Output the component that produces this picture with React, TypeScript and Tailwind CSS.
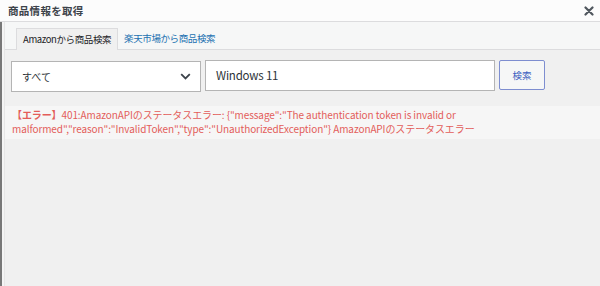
export default function App() {
  const font = { fontFamily: '"Noto Sans CJK JP", "Noto Sans", sans-serif' };
  return (
    <div className="w-[600px] h-[286px] overflow-hidden bg-[#f0f0f0] flex flex-col" style={font}>
      {/* header */}
      <div className="h-[22px] bg-[#fcfcfc] border-b border-[#dcdcde] flex items-center justify-between pl-[8px] pr-[6px] shrink-0">
        <span className="text-[10.5px] font-bold text-[#3c434a] tracking-[0.3px]">商品情報を取得</span>
        <svg width="10" height="10" viewBox="0 0 10 10" className="mt-[1px]">
          <path d="M1.5 1.5 L8.5 8.5 M8.5 1.5 L1.5 8.5" stroke="#50575e" strokeWidth="2.2" strokeLinecap="round" />
        </svg>
      </div>
      <div className="flex flex-1 min-h-0">
        <div className="w-[2px] bg-[#787878] shrink-0" />
        <div className="w-[3px] bg-[#f4f4f4] border-r border-[#e6e6e6] shrink-0" />
        <div className="flex-1 flex flex-col min-w-0">
          {/* tabs */}
          <div className="h-[28px] bg-[#f6f7f7] border-b border-[#dcdcde] flex items-end pl-[11px] shrink-0">
            <div className="h-[22px] pl-[6px] pr-[6px] bg-[#f0f0f0] border border-b-0 border-[#dcdcde] text-[9.5px] tracking-[-0.4px] text-[#1d2327] flex items-center -mb-px pb-px">
              Amazonから商品検索
            </div>
            <div className="h-[22px] px-[6px] text-[9.5px] tracking-[-0.4px] text-[#2271b1] flex items-center">
              楽天市場から商品検索
            </div>
          </div>
          {/* search */}
          <div className="flex items-start pt-[10px] pl-[6px] gap-[4px]">
            <div className="w-[190px] h-[31px] mt-[1px] bg-white border border-[#b4b4b4] flex items-center justify-between pl-[10px] pr-[9px]">
              <span className="text-[10px] text-[#2c3338]">すべて</span>
              <svg width="11" height="7" viewBox="0 0 11 7">
                <path d="M1.2 1.2 L5.5 5.5 L9.8 1.2" fill="none" stroke="#3c434a" strokeWidth="1.8" />
              </svg>
            </div>
            <div className="w-[290px] h-[31px] bg-white border border-[#b4b4b4] flex items-center pl-[10px]">
              <span className="text-[11.5px] tracking-[-0.2px] text-[#2c3338]">Windows 11</span>
            </div>
            <div className="w-[46px] h-[30px] bg-[#f6f7f7] border border-[#7e8ed0] rounded-[2px] flex items-center justify-center">
              <span className="text-[9.5px] text-[#3b5fc0]">検索</span>
            </div>
          </div>
          {/* error */}
          <div className="mt-[14px] bg-[#f6f6f6] pt-[2px] pb-[3px] pl-[7px] pr-[80px] text-[10px] tracking-[-0.1px] leading-[14px] text-[#e35d5a]">
            <span className="font-bold">【エラー】</span>401:AmazonAPIのステータスエラー: {"{"}"message":"The authentication token is invalid or malformed","reason":"InvalidToken","type":"UnauthorizedException"{"}"} AmazonAPIのステータスエラー
          </div>
        </div>
      </div>
    </div>
  );
}
